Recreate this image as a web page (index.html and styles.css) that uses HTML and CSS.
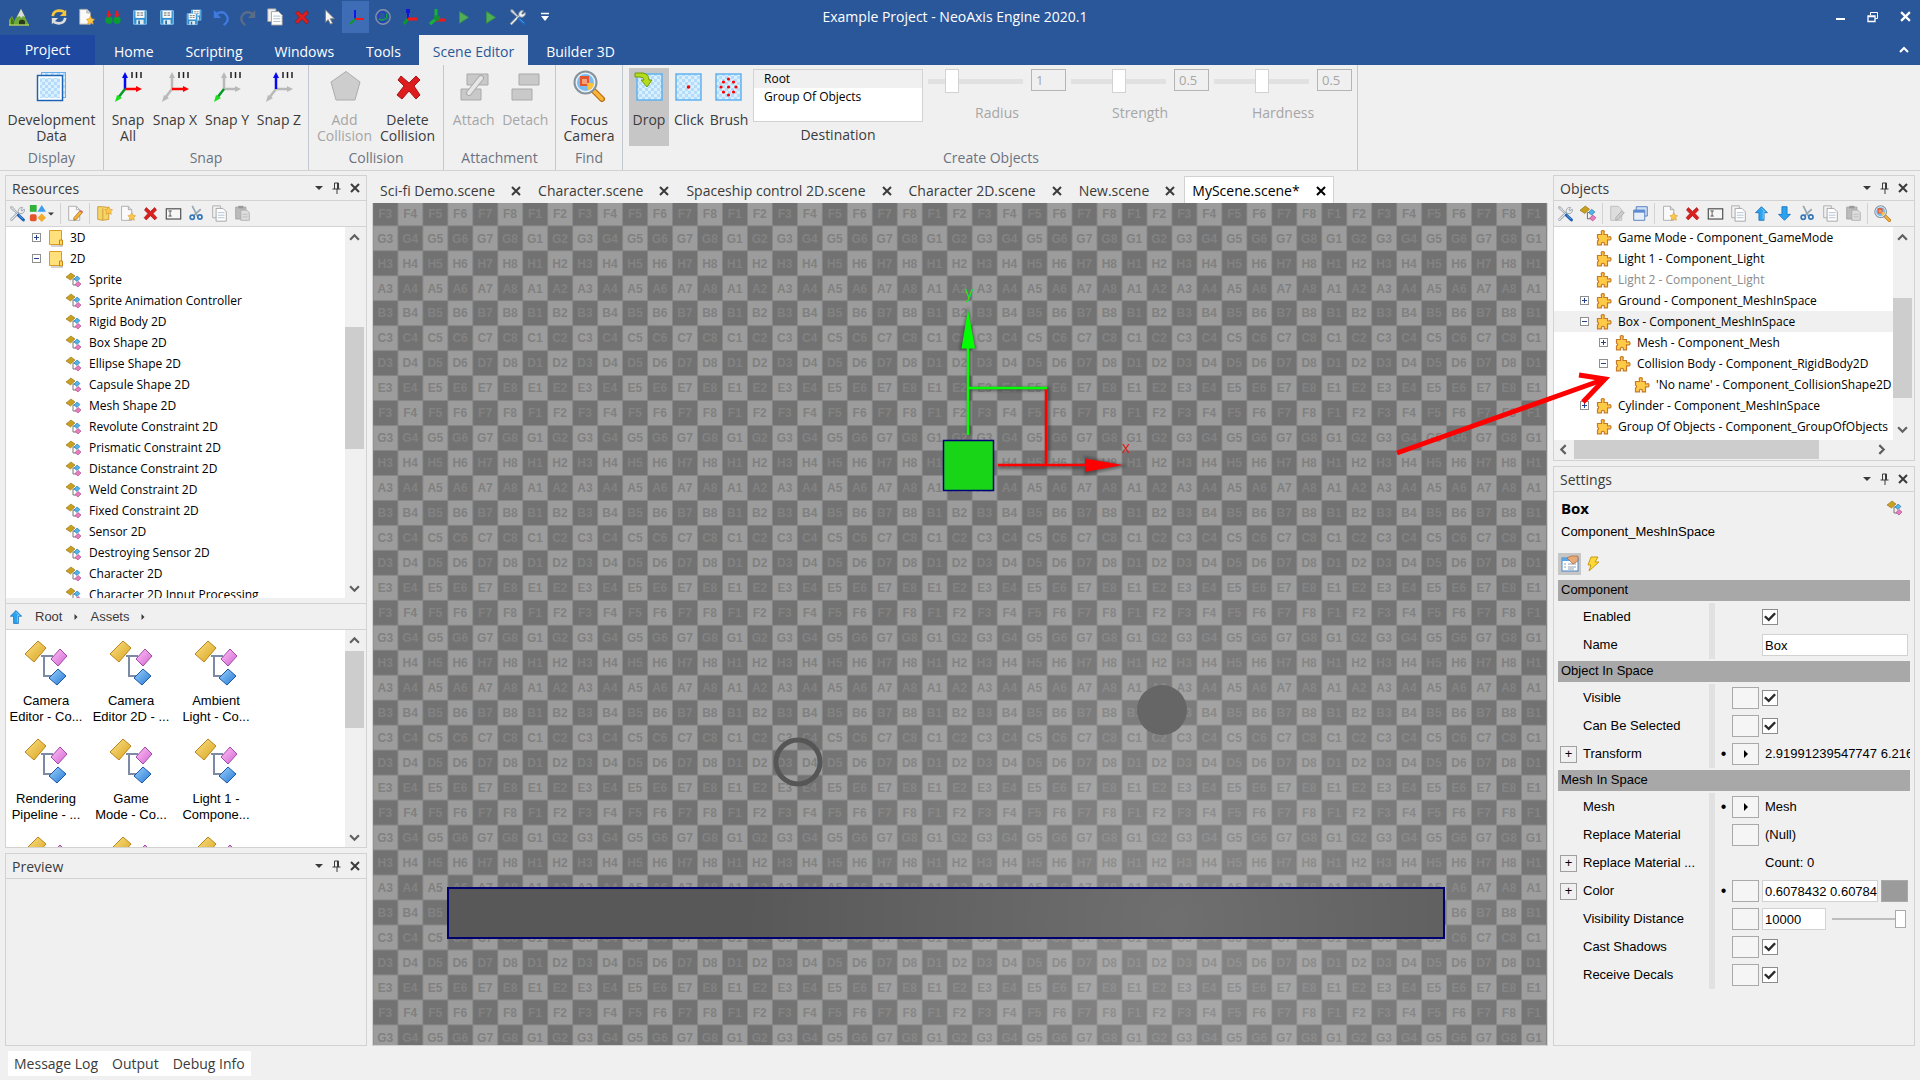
FILE: index.html
```html
<!DOCTYPE html>
<html lang="en">
<head>
<meta charset="utf-8">
<title>Example Project - NeoAxis Engine 2020.1</title>
<link rel="stylesheet" href="styles.css">
</head>
<body>
<svg class="sprites" aria-hidden="true">
  <defs>
    <linearGradient id="gGold" x1="0" y1="0" x2="1" y2="1"><stop offset="0" stop-color="#fbe38a"/><stop offset="1" stop-color="#d9a21b"/></linearGradient>
    <linearGradient id="gPink" x1="0" y1="0" x2="1" y2="1"><stop offset="0" stop-color="#ffc4f6"/><stop offset="1" stop-color="#d264d2"/></linearGradient>
    <linearGradient id="gBlue" x1="0" y1="0" x2="1" y2="1"><stop offset="0" stop-color="#9fd4fb"/><stop offset="1" stop-color="#2277d6"/></linearGradient>
    <pattern id="checks" width="6" height="6" patternUnits="userSpaceOnUse"><rect width="6" height="6" fill="#d9f0ff"/><path d="M0 0h3v3H0zM3 3h3v3H3z" fill="#b4dcfa"/></pattern>
  </defs>
  <symbol id="tools" viewBox="0 0 20 20"><path d="M2 18 11 9" stroke="#7f8a92" stroke-width="3"/><path d="M2 18 11 9" stroke="#e9eef2" stroke-width="1.5"/><path d="M11 9c-1-4 2-7 5-6l-2 3 1 1 3-2c1 3-2 6-5 5z" fill="#eef1f3" stroke="#8d969d"/><path d="M2 2l2 0 6 7-1 1-7-6z" fill="#d5dbe0" stroke="#8d969d" stroke-width=".8"/><path d="M11 12l6 5.500" stroke="#1e62b8" stroke-width="3.500" stroke-linecap="round"/><path d="M11.500 12l5 4.600" stroke="#62a8ea" stroke-width="1"/></symbol>
  <symbol id="shapes" viewBox="0 0 20 20"><path d="M1 0h8v8H1z" fill="#2fb13c"/><path d="M15 0l5 8H10z" fill="#3b9df0"/><rect x="1" y="11" width="8" height="8" rx="2" fill="#e4532c"/><path d="M15 10l5 5-5 5-5-5z" fill="#f0ad2d"/></symbol>
  <symbol id="edit" viewBox="0 0 20 20"><path d="M2 1.500h9l4 4V18H2z" fill="#fafafa" stroke="#a5a5a5"/><path d="M11 1.500v4h4" fill="none" stroke="#a5a5a5"/><path d="M8 15l7-8 3 2-7 8-3 1z" fill="#f5b437" stroke="#8b5c18" stroke-width=".7"/><path d="M15 7l1-1 3 2-1 1z" fill="#d65a5a"/></symbol>
  <symbol id="editoff" viewBox="0 0 20 20"><path d="M2 1.500h9l4 4V18H2z" fill="#ddd" stroke="#bbb"/><path d="M8 15l7-8 3 2-7 8-3 1z" fill="#ccc" stroke="#aaa"/></symbol>
  <symbol id="newfolder" viewBox="0 0 20 20"><path d="M2 2h6l7 1v14l-7 1-6-1z" fill="#f6d468" stroke="#c8962d"/><path d="M8 4v14" stroke="#c8962d"/><path d="M15 2l1.500 3 3 .500-2 2.200.500 3.300-3-1.500-3 1.500.500-3.300-2-2.200 3-.500z" fill="#fcc84a" stroke="#d9962c" stroke-width=".7"/></symbol>
  <symbol id="newdoc" viewBox="0 0 20 20"><path d="M3 1.500h8l4 4V18H3z" fill="#fafafa" stroke="#a5a5a5"/><path d="M11 1.500v4h4" fill="#ddd" stroke="#a5a5a5"/><path d="M15 9l1.500 3 3 .500-2 2.200.500 3.300-3-1.500-3 1.500.500-3.300-2-2.200 3-.500z" fill="#fcc84a" stroke="#d9962c" stroke-width=".7"/></symbol>
  <symbol id="del" viewBox="0 0 20 20"><path d="M5 3l5 4.500L15 3l2 3-4 4 4.500 5-2.500 2.500-5-5-5 5L2.500 15 7 10 3 6z" fill="#dc1f1f" stroke="#a01212" stroke-width=".8"/></symbol>
  <symbol id="rename" viewBox="0 0 20 20"><rect x="1.500" y="4.500" width="17" height="12" fill="#f6f6f6" stroke="#444" stroke-width="1.300"/><path d="M4 7h4M6 7v6M4 13h4" stroke="#444" fill="none"/></symbol>
  <symbol id="cut" viewBox="0 0 20 20"><path d="M5 1l6 12M15 5L6 13" stroke="#9aa7b1" stroke-width="2"/><circle cx="5" cy="14.500" r="2.500" fill="none" stroke="#3578b8" stroke-width="2"/><circle cx="14" cy="14" r="2.500" fill="none" stroke="#3578b8" stroke-width="2"/></symbol>
  <symbol id="copy" viewBox="0 0 20 20"><path d="M2 1h9v14H2z" fill="#f2f2f2" stroke="#a6a6a6"/><path d="M6 4h8l4 4v11H6z" fill="#fff" stroke="#9a9a9a"/><path d="M8 9h8M8 12h8M8 15h8" stroke="#a9bbcc"/></symbol>
  <symbol id="paste" viewBox="0 0 20 20"><path d="M2 2.500h12v14H2z" fill="#bbb" stroke="#a0a0a0"/><path d="M5 1h6v3H5z" fill="#999"/><path d="M8 6h7l3 3v9H8z" fill="#ddd" stroke="#aaa"/><path d="M10 11h6M10 14h6" stroke="#bbb"/></symbol>
  <symbol id="up" viewBox="0 0 20 20"><path d="M10 2l7 7h-4v9H7V9H3z" fill="#2ba4f0" stroke="#1b70c0"/><path d="M10 4l4 4H12v9" fill="none" stroke="#8ad2fb"/></symbol>
  <symbol id="down" viewBox="0 0 20 20"><path d="M10 18l7-7h-4V2H7v9H3z" fill="#2ba4f0" stroke="#1b70c0"/></symbol>
  <symbol id="windows" viewBox="0 0 20 20"><path d="M5 2h13v11H5z" fill="#cfe0f5" stroke="#4673b5"/><path d="M2 6h13v12H2z" fill="#e6effa" stroke="#4673b5"/><path d="M2 6h13v3H2z" fill="#5a8bd0"/></symbol>
  <symbol id="focus" viewBox="0 0 32 32"><path d="M20 20l9 9" stroke="#b66d15" stroke-width="6" stroke-linecap="round"/><path d="M21 21l8 8" stroke="#fbb637" stroke-width="3.500" stroke-linecap="round"/><circle cx="12.500" cy="12.500" r="11" fill="#e4f1fb" stroke="#86929c" stroke-width="2"/><circle cx="12.500" cy="12.500" r="8.500" fill="#7bbcf0"/><path d="M7 6h9v10H7z" fill="#e2552d"/><path d="M9 9h5v5H9z" fill="#f9a07a"/><path d="M14 13h6v4q-2 3-5 3z" fill="#fbc23a"/></symbol>
  <symbol id="comp" viewBox="0 0 16 16"><path d="M7 7v6h3M7 7h2" fill="none" stroke="#777" stroke-width="1"/><path d="M5 1l4 3-4.500 4L0 5z" fill="#c9a020" stroke="#8e6f10" stroke-width=".6"/><path d="M11 4l3 2.500-3 3L8 7z" fill="#4fb4e8" stroke="#2570a8" stroke-width=".6"/><path d="M12 9.500l3 2.500-3 3-3-2.500z" fill="#e77cbe" stroke="#a6407e" stroke-width=".6"/></symbol>
  <symbol id="puzzle" viewBox="0 0 16 16"><path d="M1.500 4.500h4V3Q4.500 .6 6.800 .6T8 3v1.500h3.500V7h1.300Q15 6 15 8.300T12.800 9.800h-1.300v5H8.300V13q-1.500-1.500-2.800 0v1.800h-4V11q2.300-1 0-3z" fill="#ffca45" stroke="#c57a28" stroke-width="1.200"/></symbol>
  <symbol id="folder" viewBox="0 0 16 18"><path d="M1.500 1.500h12v14h-12z" fill="#ffe07a" stroke="#d99b22"/><path d="M11.500 11h3v5h-3z" fill="#ffd862" stroke="#c98618"/><path d="M3 17h12" stroke="#aaa"/></symbol>
  <symbol id="plus" viewBox="0 0 9 9"><rect x=".5" y=".5" width="8" height="8" fill="#fff" stroke="#8e8f8f"/><path d="M2 4.500h5M4.500 2v5" stroke="#27418c"/></symbol>
  <symbol id="minus" viewBox="0 0 9 9"><rect x=".5" y=".5" width="8" height="8" fill="#fff" stroke="#8e8f8f"/><path d="M2 4.500h5" stroke="#27418c"/></symbol>
  <symbol id="bigcomp" viewBox="0 0 44 46"><path d="M17 16h12M20 16v20h8" fill="none" stroke="#7d8aa5" stroke-width="2"/><path d="M14 1l8 7L10 22 1 14z" fill="url(#gGold)" stroke="#b98518"/><path d="M36 9l7 7-9 10-7-7z" fill="url(#gPink)" stroke="#a348a8"/><path d="M34 29l8 7-9 9-8-7z" fill="url(#gBlue)" stroke="#1b58a8"/></symbol>
  <symbol id="caret" viewBox="0 0 8 8"><path d="M0 2h8L4 6z" fill="currentColor"/></symbol>
  <symbol id="pin" viewBox="0 0 10 12"><path d="M2.500 7V1h4v6M.5 7h8M5 7v5" fill="none" stroke="currentColor"/><path d="M6 1v6" stroke="currentColor" stroke-width="2"/></symbol>
  <symbol id="x" viewBox="0 0 10 10"><path d="M1 1l8 8M9 1L1 9" stroke="currentColor" stroke-width="2" fill="none"/></symbol>
  <symbol id="chevup" viewBox="0 0 10 10"><path d="M1 7l4-4 4 4" fill="none" stroke="currentColor" stroke-width="2"/></symbol>
  <symbol id="chevdown" viewBox="0 0 10 10"><path d="M1 3l4 4 4-4" fill="none" stroke="currentColor" stroke-width="2"/></symbol>
  <symbol id="chevleft" viewBox="0 0 10 10"><path d="M7 1L3 5l4 4" fill="none" stroke="currentColor" stroke-width="2"/></symbol>
  <symbol id="chevright" viewBox="0 0 10 10"><path d="M3 1l4 4-4 4" fill="none" stroke="currentColor" stroke-width="2"/></symbol>
  <symbol id="tri" viewBox="0 0 8 8"><path d="M2 0l4 4-4 4z" fill="currentColor"/></symbol>
  <symbol id="save" viewBox="0 0 20 20"><path d="M3 3h14v15H3z" fill="#2e8fd0" stroke="#8fd0f5"/><path d="M5 3h10v8H5z" fill="#fff"/><path d="M6.500 5.500h7M6.500 8h7" stroke="#555" stroke-dasharray="3 1"/><path d="M6 13h8v5H6z" fill="#dfe9f0"/><path d="M8 14h2v4H8z" fill="#2a6fa8"/></symbol>
  <symbol id="play" viewBox="0 0 20 20"><path d="M5 4l10 6.500L5 17z" fill="#4fae54" stroke="#3a8f4d"/></symbol>
</svg>

<header class="app-header">
  <div class="titlebar">
    <div class="qat" role="toolbar" aria-label="Quick access">
      <span class="logo"><svg width="22" height="22" viewBox="0 0 22 22"><path d="M1 19v-5l3-4 4 9z" fill="#7fae2a"/><path d="M4 19L13 3l8 16z" fill="#6fa83a"/><path d="M13 3l4 8-2-1-2 2-1-2-3 1z" fill="#dcdcd8"/><path d="M11 19v-4q3-3 6 0v4z" fill="#2a3a1a"/><path d="M3 11l3 4v4H3z" fill="#3f7a1c"/><path d="M1 19h20" stroke="#a9c95a" stroke-width="1.500"/></svg></span>
      <button aria-label="Refresh"><svg width="18" height="18" viewBox="0 0 20 20"><path d="M3 9Q4 3 10 3t6 3" fill="none" stroke="#f6c53c" stroke-width="3"/><path d="M18 2v7h-7z" fill="#f6c53c"/><path d="M17 11q-1 6-7 6t-6-3" fill="none" stroke="#ddd" stroke-width="3"/><path d="M2 18v-7h7z" fill="#ddd"/></svg></button>
      <button aria-label="New"><svg width="18" height="18"><use href="#newdoc"/></svg></button>
      <button aria-label="Import"><svg width="18" height="18" viewBox="0 0 20 20"><circle cx="5.500" cy="13.500" r="4" fill="#0a9c34"/><circle cx="14.500" cy="13.500" r="4" fill="#0a9c34"/><path d="M5.500 3v5M14.500 3v5" stroke="#f01818" stroke-width="2.500"/><path d="M2.500 7h6l-3 4zM11.500 7h6l-3 4z" fill="#f01818"/></svg></button>
      <button aria-label="Save"><svg width="18" height="18"><use href="#save"/></svg></button>
      <button aria-label="Save as"><svg width="18" height="18"><use href="#save"/></svg></button>
      <button aria-label="Save all"><svg width="18" height="18" viewBox="0 0 20 20"><use href="#save" x="5" y="0" width="15" height="15"/><use href="#save" x="0" y="4" width="16" height="16"/></svg></button>
      <button aria-label="Undo"><svg width="18" height="18" viewBox="0 0 20 20"><path d="M4 7q8-5 12 1t-3 11" fill="none" stroke="#3f7ae0" stroke-width="2.500"/><path d="M2 2v9h8z" fill="#3f7ae0"/></svg></button>
      <button aria-label="Redo"><svg width="18" height="18" viewBox="0 0 20 20"><path d="M16 7Q8 2 4 8t3 11" fill="none" stroke="#5b6c86" stroke-width="2.500"/><path d="M18 2v9h-8z" fill="#5b6c86"/></svg></button>
      <button aria-label="Duplicate"><svg width="18" height="18"><use href="#copy"/></svg></button>
      <button aria-label="Delete"><svg width="18" height="18"><use href="#del"/></svg></button>
      <button aria-label="Select"><svg width="18" height="18" viewBox="0 0 20 20"><path d="M6 2v14l3-3 2.500 5 2.500-1-2.500-5H16z" fill="#f3f3f3" stroke="#777"/></svg></button>
      <button aria-label="Move" class="on"><svg width="20" height="20" viewBox="0 0 20 20"><path d="M9 3v9" stroke="#1515e8" stroke-width="2"/><path d="M9 12l-5 5" stroke="#0b9a2a" stroke-width="2"/><path d="M9 12h9" stroke="#f01818" stroke-width="2"/></svg></button>
      <button aria-label="Rotate"><svg width="18" height="18" viewBox="0 0 20 20"><circle cx="10" cy="10" r="8" fill="none" stroke="#8a93a5" stroke-width="1.500"/><ellipse cx="9" cy="10" rx="4" ry="6" fill="none" stroke="#2438c8" stroke-width="1.500"/><path d="M5 12q5 3 9-1V6" fill="none" stroke="#13a049" stroke-width="1.500"/></svg></button>
      <button aria-label="Scale"><svg width="20" height="20" viewBox="0 0 20 20"><path d="M8 3v9" stroke="#1515d8" stroke-width="2"/><path d="M6 2h4v4H6z" fill="#1515d8"/><path d="M8 12l-4 5" stroke="#0b9a2a" stroke-width="3"/><path d="M8 12h9" stroke="#f01818" stroke-width="3"/></svg></button>
      <button aria-label="Move and rotate"><svg width="20" height="20" viewBox="0 0 20 20"><path d="M9 2v9" stroke="#1bb03a" stroke-width="3"/><path d="M9 12l-6 5" stroke="#1bb03a" stroke-width="3"/><path d="M9 13h9" stroke="#f01818" stroke-width="3"/><circle cx="10" cy="11" r="3" fill="#159038"/></svg></button>
      <button aria-label="Play"><svg width="18" height="18"><use href="#play"/></svg></button>
      <button aria-label="Run"><svg width="18" height="18"><use href="#play"/></svg></button>
      <button aria-label="Options"><svg width="18" height="18"><use href="#tools"/></svg></button>
      <button aria-label="Customize"><svg width="10" height="10" viewBox="0 0 10 10"><path d="M1 1.500h8" stroke="#fff" stroke-width="1.500"/><path d="M1 4h8L5 9z" fill="#fff"/></svg></button>
    </div>
    <div class="app-title">Example Project - NeoAxis Engine 2020.1</div>
    <div class="window-buttons">
      <button aria-label="Minimize"><svg width="10" height="10" viewBox="0 0 10 10"><path d="M0 7h9" stroke="#fff" stroke-width="2"/></svg></button>
      <button aria-label="Restore"><svg width="12" height="12" viewBox="0 0 12 12"><path d="M3.500 4V1.500h7v6H8" fill="none" stroke="#fff"/><path d="M1 5h7v5.500H1zM1 5.500h7" fill="none" stroke="#fff" stroke-width="1.300"/></svg></button>
      <button aria-label="Close"><svg width="11" height="11"><use href="#x"/></svg></button>
    </div>
  </div>
  <nav class="ribbon-tabs">
    <button class="project">Project</button>
    <button>Home</button><button>Scripting</button><button>Windows</button><button>Tools</button><button class="active">Scene Editor</button><button>Builder 3D</button>
    <button class="collapse" aria-label="Collapse ribbon"><svg width="10" height="10"><use href="#chevup"/></svg></button>
  </nav>
</header>

<section class="ribbon">
  <div class="group g-display">
    <div class="tools-row"><button class="big"><svg width="32" height="32" viewBox="0 0 32 32"><rect x="5.500" y="2.500" width="24" height="25" fill="url(#checks)" stroke="#69aeea"/><rect x="1.500" y="5.500" width="25" height="25" fill="#fff" stroke="#1a63b5" stroke-width="1.500"/><rect x="4" y="8" width="20" height="20" fill="url(#checks)"/></svg><span>Development Data</span></button></div>
    <div class="caption">Display</div>
  </div>
  <div class="group g-snap">
    <div class="tools-row">
      <button class="big"><svg width="32" height="32" viewBox="0 0 32 32"><path d="M13 19V5" stroke="#0808f0" stroke-width="2.500"/><path d="M10 8l3-6 3 6z" fill="#0808f0"/><path d="M13 19h12" stroke="#f00" stroke-width="2.500"/><path d="M24 16l6 3-6 3z" fill="#f00"/><path d="M13 19L6 28" stroke="#069a28" stroke-width="2.500"/><path d="M3 32l2-7 5 3z" fill="#1be01b"/><path d="M20 2v6M24.500 2v6M29 2v6" stroke="#222" stroke-width="1.500"/></svg><span>Snap All</span></button>
      <button class="big"><svg width="32" height="32" viewBox="0 0 32 32"><path d="M13 19V5M13 19L6 28" stroke="#b9b9b9" stroke-width="2.500"/><path d="M10 8l3-6 3 6zM3 32l2-7 5 3z" fill="#b9b9b9"/><path d="M13 19h12" stroke="#f00" stroke-width="2.500"/><path d="M24 16l6 3-6 3z" fill="#f00"/><path d="M20 2v6M24.500 2v6M29 2v6" stroke="#222" stroke-width="1.500"/></svg><span>Snap X</span></button>
      <button class="big"><svg width="32" height="32" viewBox="0 0 32 32"><path d="M13 19V5M13 19h12" stroke="#b9b9b9" stroke-width="2.500"/><path d="M10 8l3-6 3 6zM24 16l6 3-6 3z" fill="#b9b9b9"/><path d="M13 19L6 28" stroke="#069a28" stroke-width="2.500"/><path d="M3 32l2-7 5 3z" fill="#1be01b"/><path d="M20 2v6M24.500 2v6M29 2v6" stroke="#222" stroke-width="1.500"/></svg><span>Snap Y</span></button>
      <button class="big"><svg width="32" height="32" viewBox="0 0 32 32"><path d="M13 19h12M13 19L6 28" stroke="#b9b9b9" stroke-width="2.500"/><path d="M24 16l6 3-6 3zM3 32l2-7 5 3z" fill="#b9b9b9"/><path d="M13 19V5" stroke="#0808f0" stroke-width="2.500"/><path d="M10 8l3-6 3 6z" fill="#0808f0"/><path d="M20 2v6M24.500 2v6M29 2v6" stroke="#222" stroke-width="1.500"/></svg><span>Snap Z</span></button>
    </div>
    <div class="caption">Snap</div>
  </div>
  <div class="group g-collision">
    <div class="tools-row">
      <button class="big" disabled><svg width="32" height="32" viewBox="0 0 32 32"><path d="M17 1.500L31 12l-5 18H7L2 12z" fill="#cdcdcd" stroke="#acacac"/></svg><span>Add Collision</span></button>
      <button class="big"><svg width="32" height="32" viewBox="0 0 32 32"><path d="M9 6l8 7 7-7 4 4-6 6 6 9-4 4-7-8-7 8-5-4 7-9-6-6z" fill="#dd1d1d" stroke="#a81414"/></svg><span>Delete Collision</span></button>
    </div>
    <div class="caption">Collision</div>
  </div>
  <div class="group g-attach">
    <div class="tools-row">
      <button class="big" disabled><svg width="32" height="32" viewBox="0 0 32 32"><path d="M9 4h21v11H9zM3 19h20v11H3z" fill="#c9c9c9" stroke="#a9a9a9"/><path d="M11 23L23 8" stroke="#a9a9a9" stroke-width="6" stroke-linecap="round"/><path d="M11 23L23 8" stroke="#e6e6e6" stroke-width="4" stroke-linecap="round"/></svg><span>Attach</span></button>
      <button class="big" disabled><svg width="32" height="32" viewBox="0 0 32 32"><path d="M10 4h20v11H10zM3 19h20v11H3z" fill="#c9c9c9" stroke="#a9a9a9"/></svg><span>Detach</span></button>
    </div>
    <div class="caption">Attachment</div>
  </div>
  <div class="group g-find">
    <div class="tools-row"><button class="big"><svg width="32" height="32"><use href="#focus"/></svg><span>Focus Camera</span></button></div>
    <div class="caption">Find</div>
  </div>
  <div class="group g-create">
    <div class="tools-row">
      <button class="big on"><svg width="32" height="32" viewBox="0 0 32 32"><rect x="4" y="4" width="25" height="26" fill="url(#checks)" stroke="#62b2ee" stroke-width="1.500"/><path d="M2 3h8q6 1 6 7h3l-5 7-6-7h3q0-3-4-3H2z" fill="#b5dc1c" stroke="#6f9a08"/></svg><span>Drop</span></button>
      <button class="big"><svg width="32" height="32" viewBox="0 0 32 32"><rect x="3" y="4" width="25" height="26" fill="url(#checks)" stroke="#62b2ee" stroke-width="1.500"/><circle cx="15.500" cy="17" r="1.800" fill="#f00"/></svg><span>Click</span></button>
      <button class="big"><svg width="32" height="32" viewBox="0 0 32 32"><rect x="3" y="4" width="25" height="26" fill="url(#checks)" stroke="#62b2ee" stroke-width="1.500"/><g fill="#f00"><circle cx="15.500" cy="9" r="1.600"/><circle cx="15.500" cy="17" r="1.600"/><circle cx="15.500" cy="25" r="1.600"/><circle cx="8" cy="17" r="1.600"/><circle cx="23" cy="17" r="1.600"/><circle cx="10.500" cy="12" r="1.600"/><circle cx="20.500" cy="12" r="1.600"/><circle cx="10.500" cy="22" r="1.600"/><circle cx="20.500" cy="22" r="1.600"/></g></svg><span>Brush</span></button>
      <div class="dest">
        <ul><li class="sel">Root</li><li>Group Of Objects</li></ul>
        <span>Destination</span>
      </div>
      <div class="param"><div><input type="range" id="radius" value="21" disabled><input type="text" value="1" aria-label="Radius value" disabled></div><label for="radius">Radius</label></div>
      <div class="param"><div><input type="range" id="strength" value="50" disabled><input type="text" value="0.5" aria-label="Strength value" disabled></div><label for="strength">Strength</label></div>
      <div class="param"><div><input type="range" id="hardness" value="50" disabled><input type="text" value="0.5" aria-label="Hardness value" disabled></div><label for="hardness">Hardness</label></div>
    </div>
    <div class="caption">Create Objects</div>
  </div>
</section>

<main class="workspace">
  <div class="column left">
    <section class="panel">
      <div class="panel-head"><h2>Resources</h2><button aria-label="Menu"><svg width="8" height="8"><use href="#caret"/></svg></button><button aria-label="Pin"><svg width="10" height="12"><use href="#pin"/></svg></button><button aria-label="Close"><svg width="10" height="10"><use href="#x"/></svg></button></div>
      <div class="toolbar">
        <button aria-label="Options"><svg><use href="#tools"/></svg></button>
        <button aria-label="View" class="wide"><svg><use href="#shapes"/></svg><svg class="tiny"><use href="#caret"/></svg></button>
        <i></i><button aria-label="Edit"><svg><use href="#edit"/></svg></button>
        <i></i><button aria-label="New folder"><svg><use href="#newfolder"/></svg></button>
        <button aria-label="New"><svg><use href="#newdoc"/></svg></button>
        <button aria-label="Delete"><svg><use href="#del"/></svg></button>
        <button aria-label="Rename"><svg><use href="#rename"/></svg></button>
        <button aria-label="Cut"><svg><use href="#cut"/></svg></button>
        <button aria-label="Copy"><svg><use href="#copy"/></svg></button>
        <button aria-label="Paste"><svg><use href="#paste"/></svg></button>
      </div>
      <div class="scroll-area grow">
        <ul class="tree">
          <li class="root"><svg class="exp"><use href="#plus"/></svg><svg class="fold"><use href="#folder"/></svg>3D</li>
          <li class="root"><svg class="exp"><use href="#minus"/></svg><svg class="fold"><use href="#folder"/></svg>2D</li>
          <li><svg><use href="#comp"/></svg>Sprite</li>
          <li><svg><use href="#comp"/></svg>Sprite Animation Controller</li>
          <li><svg><use href="#comp"/></svg>Rigid Body 2D</li>
          <li><svg><use href="#comp"/></svg>Box Shape 2D</li>
          <li><svg><use href="#comp"/></svg>Ellipse Shape 2D</li>
          <li><svg><use href="#comp"/></svg>Capsule Shape 2D</li>
          <li><svg><use href="#comp"/></svg>Mesh Shape 2D</li>
          <li><svg><use href="#comp"/></svg>Revolute Constraint 2D</li>
          <li><svg><use href="#comp"/></svg>Prismatic Constraint 2D</li>
          <li><svg><use href="#comp"/></svg>Distance Constraint 2D</li>
          <li><svg><use href="#comp"/></svg>Weld Constraint 2D</li>
          <li><svg><use href="#comp"/></svg>Fixed Constraint 2D</li>
          <li><svg><use href="#comp"/></svg>Sensor 2D</li>
          <li><svg><use href="#comp"/></svg>Destroying Sensor 2D</li>
          <li><svg><use href="#comp"/></svg>Character 2D</li>
          <li><svg><use href="#comp"/></svg>Character 2D Input Processing</li>
        </ul>
        <div class="vscroll sb-tree"><svg><use href="#chevup"/></svg><b></b><svg><use href="#chevdown"/></svg></div>
      </div>
      <nav class="crumbs"><svg width="16" height="16"><use href="#up"/></svg><a href="#root">Root</a><svg width="6" height="6"><use href="#tri"/></svg><a href="#assets">Assets</a><svg width="6" height="6"><use href="#tri"/></svg></nav>
      <div class="scroll-area assets-area">
        <ul class="assets">
          <li><svg><use href="#bigcomp"/></svg>Camera<br>Editor - Co...</li>
          <li><svg><use href="#bigcomp"/></svg>Camera<br>Editor 2D - ...</li>
          <li><svg><use href="#bigcomp"/></svg>Ambient<br>Light - Co...</li>
          <li><svg><use href="#bigcomp"/></svg>Rendering<br>Pipeline - ...</li>
          <li><svg><use href="#bigcomp"/></svg>Game<br>Mode - Co...</li>
          <li><svg><use href="#bigcomp"/></svg>Light 1 -<br>Compone...</li>
          <li><svg><use href="#bigcomp"/></svg></li>
          <li><svg><use href="#bigcomp"/></svg></li>
          <li><svg><use href="#bigcomp"/></svg></li>
        </ul>
        <div class="vscroll sb-assets"><svg><use href="#chevup"/></svg><b></b><svg><use href="#chevdown"/></svg></div>
      </div>
    </section>
    <section class="panel">
      <div class="panel-head"><h2>Preview</h2><button aria-label="Menu"><svg width="8" height="8"><use href="#caret"/></svg></button><button aria-label="Pin"><svg width="10" height="12"><use href="#pin"/></svg></button><button aria-label="Close"><svg width="10" height="10"><use href="#x"/></svg></button></div>
    </section>
  </div>

  <section class="documents">
    <div class="doc-tabs">
      <div>Sci-fi Demo.scene<button aria-label="Close"><svg><use href="#x"/></svg></button></div>
      <div>Character.scene<button aria-label="Close"><svg><use href="#x"/></svg></button></div>
      <div>Spaceship control 2D.scene<button aria-label="Close"><svg><use href="#x"/></svg></button></div>
      <div>Character 2D.scene<button aria-label="Close"><svg><use href="#x"/></svg></button></div>
      <div>New.scene<button aria-label="Close"><svg><use href="#x"/></svg></button></div>
      <div class="active">MyScene.scene*<button aria-label="Close"><svg><use href="#x"/></svg></button></div>
    </div>
    <div class="viewport">
      <svg class="scene" width="100%" height="100%">
        <defs>
          <radialGradient id="lamp" gradientUnits="userSpaceOnUse" cx="800" cy="720" r="430"><stop offset="0" stop-color="#fff" stop-opacity=".14"/><stop offset=".5" stop-color="#fff" stop-opacity=".07"/><stop offset="1" stop-color="#fff" stop-opacity="0"/></radialGradient>
          <filter id="soft"><feGaussianBlur stdDeviation="1.500"/></filter>
        </defs>
        <g id="tiles"></g>
        <rect width="100%" height="100%" fill="url(#lamp)"/>
        <circle cx="425" cy="559" r="22" fill="none" stroke="#565656" stroke-width="5"/>
        <circle cx="789" cy="507" r="25" fill="#666"/>
        <rect x="75" y="685" width="996" height="50" fill="#585858"/>
        <rect x="75" y="685" width="996" height="50" fill="url(#lamp)" stroke="#00006e" stroke-width="2"/>
        <g filter="url(#soft)" opacity=".55" stroke="#333" fill="none" stroke-width="4"><path d="M596 232V140M596 186h79v75M625 264h90"/><path d="M586 147l9-44 9 44zM711 253l44 10-44 9z" fill="#333" stroke="none"/></g>
        <path d="M673 186v76M625 262h90" stroke="#f00" stroke-width="2.500" fill="none"/>
        <path d="M712 255.500l38 6.500-38 7z" fill="#f00"/>
        <path d="M595 232v-90M595 185h79" stroke="#0f0" stroke-width="2.500" fill="none"/>
        <path d="M588.500 145.500l6.500-39 7 39z" fill="#0f0"/>
        <rect x="570.500" y="237.500" width="50" height="50" fill="#18d518" stroke="#000078" stroke-width="1.500"/>
        <text class="axis" x="596" y="95" fill="#12e812">y</text>
        <text class="axis" x="753" y="250" fill="#e02020">x</text>
      </svg>
    </div>
  </section>

  <div class="column right">
    <section class="panel">
      <div class="panel-head"><h2>Objects</h2><button aria-label="Menu"><svg width="8" height="8"><use href="#caret"/></svg></button><button aria-label="Pin"><svg width="10" height="12"><use href="#pin"/></svg></button><button aria-label="Close"><svg width="10" height="10"><use href="#x"/></svg></button></div>
      <div class="toolbar">
        <button aria-label="Options"><svg><use href="#tools"/></svg></button>
        <button aria-label="Components"><svg><use href="#comp"/></svg></button>
        <i></i><button aria-label="Edit"><svg><use href="#editoff"/></svg></button>
        <button aria-label="Windows"><svg><use href="#windows"/></svg></button>
        <i></i><button aria-label="New"><svg><use href="#newdoc"/></svg></button>
        <button aria-label="Delete"><svg><use href="#del"/></svg></button>
        <button aria-label="Rename"><svg><use href="#rename"/></svg></button>
        <button aria-label="Duplicate"><svg><use href="#copy"/></svg></button>
        <button aria-label="Move up"><svg><use href="#up"/></svg></button>
        <button aria-label="Move down"><svg><use href="#down"/></svg></button>
        <button aria-label="Cut"><svg><use href="#cut"/></svg></button>
        <button aria-label="Copy"><svg><use href="#copy"/></svg></button>
        <button aria-label="Paste"><svg><use href="#paste"/></svg></button>
        <i></i><button aria-label="Focus"><svg><use href="#focus"/></svg></button>
      </div>
      <div class="scroll-area grow">
        <ul class="tree objects">
          <li><span class="exp"></span><svg><use href="#puzzle"/></svg>Game Mode - Component_GameMode</li>
          <li><span class="exp"></span><svg><use href="#puzzle"/></svg>Light 1 - Component_Light</li>
          <li class="dim"><span class="exp"></span><svg><use href="#puzzle"/></svg>Light 2 - Component_Light</li>
          <li><svg class="exp"><use href="#plus"/></svg><svg><use href="#puzzle"/></svg>Ground - Component_MeshInSpace</li>
          <li class="sel"><svg class="exp"><use href="#minus"/></svg><svg><use href="#puzzle"/></svg>Box - Component_MeshInSpace</li>
          <li class="l2"><svg class="exp"><use href="#plus"/></svg><svg><use href="#puzzle"/></svg>Mesh - Component_Mesh</li>
          <li class="l2"><svg class="exp"><use href="#minus"/></svg><svg><use href="#puzzle"/></svg>Collision Body - Component_RigidBody2D</li>
          <li class="l3"><span class="exp"></span><svg><use href="#puzzle"/></svg>'No name' - Component_CollisionShape2D</li>
          <li><svg class="exp"><use href="#plus"/></svg><svg><use href="#puzzle"/></svg>Cylinder - Component_MeshInSpace</li>
          <li><span class="exp"></span><svg><use href="#puzzle"/></svg>Group Of Objects - Component_GroupOfObjects</li>
        </ul>
        <div class="vscroll sb-objects"><svg><use href="#chevup"/></svg><b></b><svg><use href="#chevdown"/></svg></div>
      </div>
      <div class="hscroll"><svg><use href="#chevleft"/></svg><b></b><svg><use href="#chevright"/></svg></div>
    </section>
    <section class="panel settings">
      <div class="panel-head"><h2>Settings</h2><button aria-label="Menu"><svg width="8" height="8"><use href="#caret"/></svg></button><button aria-label="Pin"><svg width="10" height="12"><use href="#pin"/></svg></button><button aria-label="Close"><svg width="10" height="10"><use href="#x"/></svg></button></div>
      <div class="settings-body">
        <div class="object-head"><h3>Box</h3><svg width="16" height="16"><use href="#comp"/></svg></div>
        <p>Component_MeshInSpace</p>
        <div class="mode-row">
          <button class="on" aria-label="Properties"><svg width="18" height="18" viewBox="0 0 18 18"><rect x="1" y="3" width="16" height="13" fill="#fff" stroke="#4a83c4"/><path d="M1 3h16v3H1z" fill="#58a4e6"/><path d="M3 9h2M3 12h2M7 9h8M7 12h8M7 14h6" stroke="#8da0b4"/><path d="M6 3l4-2h7v5l-5 3-3-3z" fill="#e7a977" stroke="#a8693b" stroke-width=".7"/></svg></button>
          <button aria-label="Events"><svg width="16" height="16" viewBox="0 0 16 16"><path d="M6 1h7l-3 5h4L4 15l2-6H3z" fill="#ffd935" stroke="#c99a12"/></svg></button>
        </div>
        <h4>Component</h4>
        <div class="rows">
          <div class="row"><label for="enabled">Enabled</label><div class="val"><input type="checkbox" id="enabled" checked></div></div>
          <div class="row"><label for="name">Name</label><div class="val"><input type="text" id="name" value="Box"></div></div>
        </div>
        <h4>Object In Space</h4>
        <div class="rows">
          <div class="row"><label for="visible">Visible</label><button class="ref" aria-label="Reference"></button><div class="val"><input type="checkbox" id="visible" checked></div></div>
          <div class="row"><label for="selectable">Can Be Selected</label><button class="ref" aria-label="Reference"></button><div class="val"><input type="checkbox" id="selectable" checked></div></div>
          <div class="row"><button class="open" aria-label="Expand">+</button><span class="lbl">Transform</span><span class="dot">•</span><button class="ref" aria-label="Reference"><svg width="8" height="8"><use href="#tri"/></svg></button><div class="val txt">2.91991239547747 6.216</div></div>
        </div>
        <h4>Mesh In Space</h4>
        <div class="rows">
          <div class="row"><span class="lbl">Mesh</span><span class="dot">•</span><button class="ref" aria-label="Reference"><svg width="8" height="8"><use href="#tri"/></svg></button><div class="val txt">Mesh</div></div>
          <div class="row"><span class="lbl">Replace Material</span><button class="ref" aria-label="Reference"></button><div class="val txt">(Null)</div></div>
          <div class="row"><button class="open" aria-label="Expand">+</button><span class="lbl">Replace Material ...</span><div class="val txt">Count: 0</div></div>
          <div class="row"><button class="open" aria-label="Expand">+</button><label for="color">Color</label><span class="dot">•</span><button class="ref" aria-label="Reference"></button><div class="val"><input type="text" id="color" value="0.6078432 0.6078432 0.6078432"><button class="swatch" aria-label="Pick color"></button></div></div>
          <div class="row"><label for="distance">Visibility Distance</label><button class="ref" aria-label="Reference"></button><div class="val"><input type="text" id="distance" class="short" value="10000"><input type="range" class="line" aria-label="Visibility Distance slider" value="100"></div></div>
          <div class="row"><label for="shadows">Cast Shadows</label><button class="ref" aria-label="Reference"></button><div class="val"><input type="checkbox" id="shadows" checked></div></div>
          <div class="row"><label for="decals">Receive Decals</label><button class="ref" aria-label="Reference"></button><div class="val"><input type="checkbox" id="decals" checked></div></div>
        </div>
      </div>
    </section>
    <svg class="pointer" width="224" height="94" viewBox="0 0 224 94"><path d="M4 85L212 11" stroke="#f00" stroke-width="5" fill="none"/><path d="M186 7l26 4-22 23" stroke="#f00" stroke-width="5" fill="none"/></svg>
  </div>
</main>

<footer class="status"><div><button>Message Log</button><button>Output</button><button>Debug Info</button></div></footer>
<script src="scene.js"></script>
</body>
</html>
```
FILE: styles.css
```css
* { box-sizing: border-box; }
body { margin: 0; height: 100vh; display: flex; flex-direction: column; overflow: hidden; background: #f0f0f0; color: #3b3b3b; font: 14px/20px "Open Sans", "Noto Sans", sans-serif; }
button, input { font: inherit; color: inherit; margin: 0; padding: 0; border: 0; border-radius: 0; background: none; }
svg { display: block; flex: none; }
ul { margin: 0; padding: 0; list-style: none; }
h2, h3, h4, p { margin: 0; font-weight: normal; font-size: inherit; }
.sprites { position: absolute; width: 0; height: 0; }

/* Header */
.app-header { flex: none; background: #2a579a; color: #fff; }
.titlebar { display: grid; grid-template-columns: 1fr auto 1fr; align-items: center; height: 35px; padding: 0 10px 2px 0; }
.qat { display: flex; padding-left: 8px; }
.logo { width: 37px; display: flex; align-items: center; }
.qat button { width: 27px; height: 32px; display: flex; align-items: center; justify-content: center; }
.qat button.on { background: #3e6db5; }
.window-buttons { display: flex; justify-content: flex-end; margin-right: -21px; padding-right: 10px; }
.window-buttons button { width: 32px; height: 32px; display: flex; align-items: center; justify-content: center; }
.ribbon-tabs { display: flex; height: 30px; gap: 4px; padding-right: 11px; }
.ribbon-tabs button { padding: 3px 14px 0; }
.ribbon-tabs .project { width: 95px; margin-right: 1px; padding: 0; background: #1f48a1; }
.ribbon-tabs .active { background: #f0f0f0; color: #2a579a; }
.ribbon-tabs .collapse { margin-left: auto; padding: 0; }

/* Ribbon */
.ribbon { flex: none; display: flex; height: 106px; border-bottom: 1px solid #d2d2d2; }
.group { flex: none; display: flex; flex-direction: column; padding: 3px 4px 0; border-right: 1px solid #c3c7cf; }
.g-display { width: 104px; }
.g-snap { width: 205px; }
.g-snap .big { flex: none; width: 52px; }
.g-snap .big:first-child { width: 42px; }
.g-collision { width: 135px; }
.g-attach { width: 112px; }
.g-find { width: 67px; }
.g-create { width: 735px; padding-left: 6px; }
.g-create .big { width: 40px; flex: none; }
.tools-row { display: flex; justify-content: center; height: 78px; }
.g-create .tools-row { justify-content: flex-start; }
.big { flex: 1; display: flex; flex-direction: column; align-items: center; gap: 10px; padding-top: 2px; line-height: 16px; }
.big span { text-align: center; width: min-content; min-width: 100%; display: flex; justify-content: center; }
.g-display span, .g-collision span, .g-find span { padding: 0 2px; }
.g-attach span, .g-snap .big:not(:first-child) span { white-space: nowrap; }
.big.on { background: #c6c6c6; }
.big:disabled, .param { color: #a6a6a6; }
.caption { color: #6c7380; text-align: center; line-height: 24px; }
.dest { width: 170px; margin: 1px 0 0 4px; text-align: center; }
.dest ul { height: 53px; border: 1px solid #d2d2d2; background: #fff; color: #000; text-align: left; font-size: 12px; line-height: 18px; }
.dest li { padding-left: 10px; }
.dest .sel { background: #f0f0f0; }
.dest span { line-height: 26px; }
.param { width: 138px; margin: 1px 0 0 5px; text-align: center; }
.param div { display: flex; justify-content: space-between; }
.param label { display: block; margin-top: 10px; }
.param input[type=text] { width: 35px; height: 22px; padding-left: 4px; border: 1px solid #b5b5b5; font-size: 13px; }
input[type=range] { appearance: none; }
.param input[type=range] { width: 95px; height: 24px; background: linear-gradient(#e1e1e1, #e1e1e1) center / 100% 5px no-repeat; }
.param input::-webkit-slider-thumb { appearance: none; width: 14px; height: 24px; background: #fff; border: 1px solid #d2d2d2; }

/* Workspace */
.workspace { flex: 1; min-height: 0; display: grid; grid-template-columns: 362px minmax(0, 1fr) 362px; gap: 5px; padding: 4px 5px 0; }
.column { display: grid; gap: 5px; min-height: 0; position: relative; }
.left { grid-template-rows: minmax(0, 1fr) 193px; }
.right { grid-template-rows: 286px minmax(0, 1fr); }
.panel { display: flex; flex-direction: column; min-height: 0; border: 1px solid #d2d2d2; }
.panel-head { flex: none; display: flex; align-items: center; height: 25px; padding: 0 2px 0 6px; border-bottom: 1px solid #d2d2d2; }
.panel-head h2 { flex: 1; padding-top: 1px; }
.panel-head button { width: 18px; display: flex; justify-content: center; }
.toolbar { flex: none; display: flex; align-items: center; height: 26px; border-bottom: 1px solid #d2d2d2; }
.toolbar button { width: 23px; height: 22px; display: flex; align-items: center; justify-content: center; }
.toolbar svg { width: 17px; height: 17px; }
.toolbar .wide { width: 29px; justify-content: flex-start; }
.toolbar .tiny { width: 6px; height: 6px; margin-left: 2px; }
.toolbar i { width: 1px; height: 21px; margin: 0 3px 0 2px; background: #d2d2d2; }
.scroll-area { display: flex; min-height: 0; overflow: hidden; }
.grow { flex: 1; }
.left .grow { margin-bottom: 5px; }
.tree { flex: 1; min-width: 0; overflow: hidden; background: #fff; color: #000; font-size: 12px; }
.tree li { display: flex; align-items: center; height: 21px; padding-left: 60px; white-space: nowrap; }
.tree li svg { width: 16px; height: 16px; margin-right: 7px; }
.tree .root { padding-left: 26px; }
.tree li .exp { flex: none; width: 9px; height: 9px; margin-right: 7px; }
.tree li .fold { height: 18px; margin-right: 6px; }
.tree.objects li { padding-left: 26px; }
.tree.objects li svg:not(.exp) { margin-right: 6px; }
.tree.objects .l2 { padding-left: 45px; }
.tree.objects .l3 { padding-left: 64px; }
.tree .sel { background: #f0f0f0; }
.tree .dim { color: #8a8a8a; }
.vscroll { flex: none; width: 21px; padding-right: 2px; display: grid; color: #606060; }
.vscroll svg, .hscroll svg { width: 11px; height: 11px; place-self: center; }
.vscroll b, .hscroll b { background: #cdcdcd; }
.vscroll b { grid-row: 3; }
.vscroll svg:last-child { grid-row: 5; }
.sb-tree { grid-template-rows: 20px 80fr 122fr 129fr 20px; }
.sb-assets { grid-template-rows: 20px 1fr 77fr 98fr 20px; }
.sb-objects { grid-template-rows: 20px 51fr 100fr 20fr 22px; }
.hscroll { flex: none; display: grid; height: 20px; padding-bottom: 1px; grid-template-columns: 19px 1px 245fr 52fr 20px 23px; color: #606060; }
.hscroll b { grid-column: 3; }
.hscroll svg:last-child { grid-column: 5; }
.crumbs { flex: none; display: flex; align-items: center; gap: 11px; height: 27px; padding-left: 2px; border-block: 1px solid #d2d2d2; font: 13px/20px "Liberation Sans", sans-serif; }
.crumbs a { color: inherit; text-decoration: none; }
.assets-area { flex: none; height: 217px; }
.assets { flex: 1; display: grid; grid-template-columns: repeat(3, 85px); grid-auto-rows: 98px; align-content: start; overflow: hidden; background: #fff; color: #000; font: 13px/16px "Liberation Sans", sans-serif; text-align: center; }
.assets li { padding-top: 10px; margin-left: -5px; }
.assets svg { width: 44px; height: 46px; margin: 0 auto 7px; }

/* Documents */
.documents { display: flex; flex-direction: column; min-height: 0; }
.doc-tabs { flex: none; display: flex; gap: 1px; height: 28px; padding-top: 1px; }
.doc-tabs > div { display: flex; align-items: center; gap: 16px; padding: 1px 7px 0; border: 1px solid transparent; border-bottom: 0; }
.doc-tabs .active { background: #fff; border-color: #d2d2d2; color: #000; }
.doc-tabs svg { width: 10px; height: 10px; }
.viewport { flex: 1; min-height: 0; border: 1px solid #d2d2d2; border-top: 0; overflow: hidden; background: #868686; }
.scene text { font: bold 12px "Liberation Sans", sans-serif; text-anchor: middle; }
.scene .axis { font: 16px "Open Sans", sans-serif; }

/* Settings */
.settings-body { flex: 1; min-height: 0; padding: 5px 4px 0; color: #000; font: 13px/20px "Liberation Sans", sans-serif; }
.object-head { display: flex; justify-content: space-between; align-items: center; padding: 0 7px 0 3px; font: bold 15px/22px "Open Sans", sans-serif; }
.object-head h3 { font-weight: bold; }
.settings-body p { padding: 4px 3px 3px; line-height: 17px; }
.mode-row { display: flex; margin: 10px 0 5px; }
.mode-row button { width: 23px; height: 22px; display: flex; align-items: center; justify-content: center; }
.mode-row .on { background: #c6c6c6; }
h4 { height: 21px; padding-left: 3px; background: #a8a8a8; }
.rows { padding: 2px 0; }
.row { display: grid; grid-template-columns: 25px 126px 6px 17px 30px minmax(0, 1fr); align-items: center; height: 28px; background: linear-gradient(#e1e1e1, #e1e1e1) 151px 0 / 6px 100% no-repeat; }
.row > * { grid-row: 1; }
.row label, .lbl { grid-column: 2; }
.dot { grid-column: 4; text-align: center; font-size: 16px; }
.open { grid-column: 1; justify-self: start; margin-left: 2px; width: 17px; height: 17px; border: 1px solid #a0a0a0; line-height: 14px; }
.ref { grid-column: 5; width: 27px; height: 22px; border: 1px solid #a9a9a9; background: #f5f5f5; display: flex; align-items: center; justify-content: center; }
.val { grid-column: 6; display: flex; align-items: center; gap: 3px; padding-right: 2px; }
.txt { display: block; padding: 0 0 0 3px; overflow: hidden; white-space: nowrap; }
.val input[type=text] { flex: 1; min-width: 0; height: 22px; padding-left: 2px; border: 1px solid #d2d2d2; background: #fff; }
.val input.short { flex: 0 0 64px; }
.val input[type=checkbox] { appearance: none; width: 16px; height: 16px; border: 1px solid #8c8c8c; background: #fff; display: flex; align-items: center; justify-content: center; }
.val input[type=checkbox]::before { content: ""; width: 12px; height: 10px; background: #2b2b2b; clip-path: polygon(0 50%, 15% 35%, 38% 62%, 85% 5%, 100% 20%, 40% 95%); }
.swatch { width: 27px; height: 22px; background: #9b9b9b; border: 1px solid #a9a9a9; }
.line { flex: 1; min-width: 0; height: 18px; margin: 0 2px 0 3px; background: linear-gradient(#bdbdbd, #bdbdbd) center / 100% 2px no-repeat; }
.line::-webkit-slider-thumb { appearance: none; width: 11px; height: 18px; background: #fff; border: 1px solid #a9a9a9; }

/* Callout lying over the viewport and the object tree */
.pointer { position: absolute; left: -160px; top: 193px; pointer-events: none; }

.status { flex: none; height: 34px; padding: 5px 8px; }
.status div { display: inline-flex; gap: 14px; height: 25px; padding: 0 6px; background: #fff; }
```
FILE: scene.js
```js
// Fills the viewport with the lettered checker texture.
const SVG = "http://www.w3.org/2000/svg";
const tiles = document.getElementById("tiles");
const view = document.querySelector(".viewport").getBoundingClientRect();
const size = 24.97;
const letters = "FGHABCDE";
const digits = "34567812";
const add = (name, attrs, text) => {
  const el = document.createElementNS(SVG, name);
  for (const key in attrs) el.setAttribute(key, attrs[key]);
  if (text) el.textContent = text;
  tiles.appendChild(el);
};
for (let r = 0; r * size - 2.4 < view.height; r++) {
  for (let c = 0; c * size - 0.3 < view.width; c++) {
    const dark = (r + c) % 2 === 0;
    const x = c * size - 0.3;
    const y = r * size - 2.4;
    add("rect", { x: x + 0.7, y: y + 0.7, width: size - 1, height: size - 1, fill: dark ? "#727272" : "#9c9c9c" });
    add("text", { x: x + 12.5, y: y + 17, fill: dark ? "#828282" : "#808080" }, letters[r % 8] + digits[c % 8]);
  }
}
```
